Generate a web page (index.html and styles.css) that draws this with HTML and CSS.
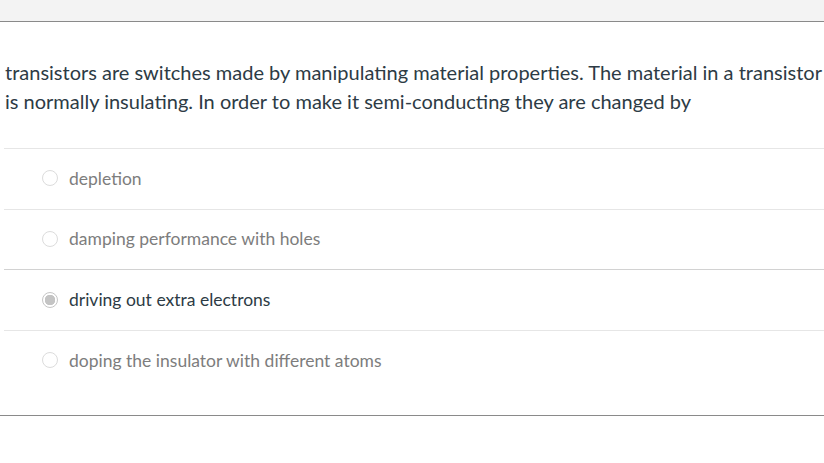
FILE: index.html
```html
<!DOCTYPE html>
<html>
<head>
<meta charset="utf-8">
<link rel="stylesheet" href="styles.css">
</head>
<body>
<div class="header"></div>
<div class="question">
  <p class="prompt">transistors are switches made by manipulating material properties. The material in a transistor is normally insulating. In order to make it semi-conducting they are changed by</p>
  <div class="answers">
    <div class="answer"><span class="radio"></span><span class="label">depletion</span></div>
    <div class="answer"><span class="radio"></span><span class="label">damping performance with holes</span></div>
    <div class="answer selected"><span class="radio"></span><span class="label">driving out extra electrons</span></div>
    <div class="answer"><span class="radio"></span><span class="label">doping the insulator with different atoms</span></div>
  </div>
</div>
<div class="footer"></div>
</body>
</html>
```
FILE: styles.css
```css
html, body {
  margin: 0;
  padding: 0;
  background: #fff;
  font-family: Lato, "Open Sans", sans-serif;
}
.header {
  height: 21px;
  background: #f3f3f3;
  border-bottom: 1px solid #8a8a8a;
}
.question {
  padding: 0 0 0 4px;
}
.prompt {
  margin: 36px 0 0 0;
  padding-left: 1px;
  font-size: 20px;
  line-height: 29px;
  color: #2d3b45;
}
.answers {
  margin-top: 32px;
}
.answer {
  display: flex;
  align-items: center;
  height: 60.67px;
  box-sizing: border-box;
  border-top: 1px solid #e6e6e6;
  padding-left: 38px;
  padding-bottom: 1px;
}
.answer.selected {
  border-top-color: #d2d2d2;
}
.radio {
  width: 14px;
  height: 14px;
  border: 1px solid #dcdcdc;
  border-radius: 50%;
  background: #fff;
  box-sizing: content-box;
  flex: none;
  margin-right: 11px;
}
.answer.selected .radio {
  border: 1px solid #c6c6c6;
  background: radial-gradient(circle, #c4c4c4 0 5px, #fff 5.5px);
}
.label {
  font-size: 17.5px;
  color: #7d7d7d;
}
.answer.selected .label {
  color: #2d3b45;
}
.footer {
  margin-top: 24px;
  border-top: 1px solid #8a8a8a;
}
```
